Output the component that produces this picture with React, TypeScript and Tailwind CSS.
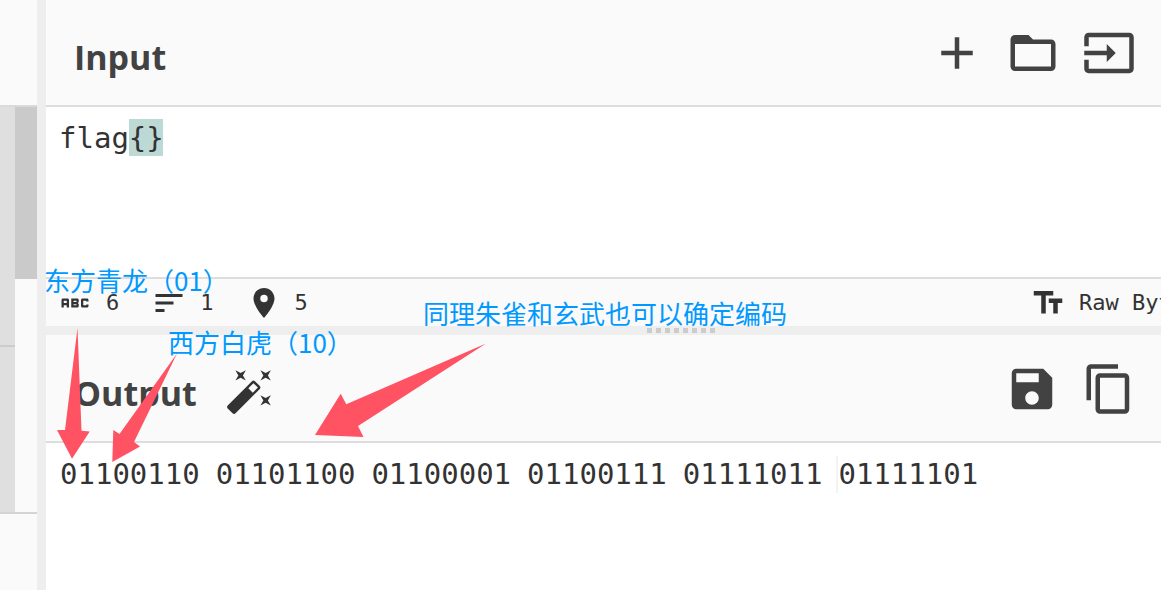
import type { ReactNode } from "react";
import {
  MdAbc,
  MdAdd,
  MdContentCopy,
  MdFolderOpen,
  MdInput,
  MdPlace,
  MdSave,
  MdSort,
  MdTextFields,
} from "react-icons/md";

const BYTES = ["01100110", "01101100", "01100001", "01100111", "01111011"];
const LAST_BYTE = "01111101";

function IconButton({ label, children }: { label: string; children: ReactNode }) {
  return (
    <button type="button" aria-label={label} className="text-[54px] text-[#424242]">
      {children}
    </button>
  );
}

function PaneHeader({ children }: { children: ReactNode }) {
  return (
    <header className="flex h-[107px] shrink-0 items-center border-b-2 border-[#ddd] bg-[#fafafa] pr-[25px] pl-7">
      {children}
    </header>
  );
}

function PaneTitle({ children }: { children: ReactNode }) {
  return (
    <h2 className="pt-2 font-['Open_Sans','Noto_Sans',sans-serif] text-[34px] leading-[48px] font-bold text-[#424242]">
      {children}
    </h2>
  );
}

function Stat({ icon, value }: { icon: ReactNode; value: string }) {
  return (
    <div className="flex items-center gap-[13px]">
      <span className="text-[36px]">{icon}</span>
      <span>{value}</span>
    </div>
  );
}

function Wand() {
  return (
    <svg viewBox="0 0 24 24" className="size-[50px]" fill="currentColor" aria-hidden="true">
      <path d="M7.5 5.6 5 7l1.4-2.5L5 2l2.5 1.4L10 2 8.6 4.5 10 7 7.5 5.6m12 9.8L22 14l-1.4 2.5L22 19l-2.5-1.4L17 19l1.4-2.5L17 14l2.5 1.4M22 2l-1.4 2.5L22 7l-2.5-1.4L17 7l1.4-2.5L17 2l2.5 1.4L22 2m-8.66 10.78 2.44-2.44-2.12-2.12-2.44 2.44 2.12 2.12m1.03-5.49 2.34 2.34c.39.37.39 1.02 0 1.41L5.04 22.71c-.39.39-1.04.39-1.41 0l-2.34-2.34c-.39-.37-.39-1.02 0-1.41L12.96 7.29c.39-.39 1.04-.39 1.41 0Z" />
    </svg>
  );
}

function Sidebar() {
  return (
    <aside className="flex w-[37px] shrink-0 flex-col bg-[#fafafa]">
      <div className="h-[105px]" />
      <div className="flex h-[409px] border-y-2 border-t-[#dadada] border-b-[#d4d4d4]">
        <div className="w-[15px] bg-[#dfdfdf]">
          <div className="h-[240px] border-b-2 border-[#ccc]" />
        </div>
        <div className="flex-1">
          <div className="h-[172px] bg-[#cacaca]" />
        </div>
      </div>
    </aside>
  );
}

function Annotations() {
  return (
    <div className="pointer-events-none absolute inset-0 overflow-hidden font-['Noto_Sans_CJK_SC',sans-serif] text-[26px] leading-8 whitespace-nowrap text-[#0099ff]">
      <svg width="500" height="480" className="absolute top-0 left-0" fill="#ff5263" aria-hidden="true">
        <polygon points="77.5,328 81.5,430.7 89.7,431.5 72,458.7 57,430 65,430" />
        <polygon points="177,353.5 134,442 140,446.5 112.3,462 113.3,430 119.5,434" />
        <polygon points="486,343.5 358,426 363.5,437 315,435 340.7,393.7 346.3,404.3" />
      </svg>
      <p className="absolute top-[264px] left-[44px]">东方青龙（01）</p>
      <p className="absolute top-[326px] left-[168px]">西方白虎（10）</p>
      <p className="absolute top-[297px] left-[423px]">同理朱雀和玄武也可以确定编码</p>
    </div>
  );
}

export default function App() {
  return (
    <div className="relative flex min-h-screen overflow-hidden bg-white font-['DejaVu_Sans_Mono','Liberation_Mono',monospace] text-[#333]">
      <Sidebar />
      <div className="w-[9px] shrink-0 bg-[#eee]" />

      <main className="flex min-w-0 flex-1 flex-col">
        <section className="flex flex-col">
          <PaneHeader>
            <PaneTitle>Input</PaneTitle>
            <div className="ml-auto flex gap-[22px]">
              <IconButton label="Add input tab"><MdAdd /></IconButton>
              <IconButton label="Open folder"><MdFolderOpen /></IconButton>
              <IconButton label="Open file"><MdInput /></IconButton>
            </div>
          </PaneHeader>

          <div className="grid h-[170px] px-[13px] pt-3">
            <div className="ml-[70px] h-[37px] w-[34px] bg-[#bdd9d6] [grid-area:1/1]" />
            <textarea
              aria-label="Input"
              defaultValue="flag{}"
              spellCheck={false}
              className="relative resize-none bg-transparent pt-px text-[29px] leading-[37px] outline-none [grid-area:1/1]"
            />
          </div>

          <div className="flex h-[49px] items-center gap-8 overflow-hidden border-t-2 border-[#ddd] bg-[#fafafa] pt-px pl-[11px] text-[22px] leading-7">
            <Stat icon={<MdAbc />} value="6" />
            <Stat icon={<MdSort />} value="1" />
            <Stat icon={<MdPlace />} value="5" />
            <div className="ml-auto w-[131px] overflow-hidden whitespace-nowrap">
              <Stat icon={<MdTextFields />} value="Raw Bytes" />
            </div>
          </div>
        </section>

        <div className="flex h-[9px] items-center gap-1 bg-[#eee] pl-[601px]">
          {Array.from({ length: 8 }, (_, i) => (
            <span key={i} className="size-[5px] shrink-0 bg-[#ccc]" />
          ))}
        </div>

        <section className="flex flex-1 flex-col bg-[#fafafa] pt-px">
          <PaneHeader>
            <PaneTitle>Output</PaneTitle>
            <button type="button" aria-label="Magic" className="ml-7 pt-1">
              <Wand />
            </button>
            <div className="ml-auto flex gap-[23px]">
              <IconButton label="Save output"><MdSave /></IconButton>
              <IconButton label="Copy output"><MdContentCopy /></IconButton>
            </div>
          </PaneHeader>

          <output
            aria-label="Output"
            className="flex flex-1 items-start gap-4 bg-white px-3.5 pt-[13px] text-[29px] leading-[37px]"
          >
            {BYTES.map((byte) => (
              <span key={byte}>{byte} </span>
            ))}
            <span className="-ml-0.5 border-l-2 border-[#f3f3f3]">{LAST_BYTE}</span>
          </output>
        </section>
      </main>

      <Annotations />
    </div>
  );
}
